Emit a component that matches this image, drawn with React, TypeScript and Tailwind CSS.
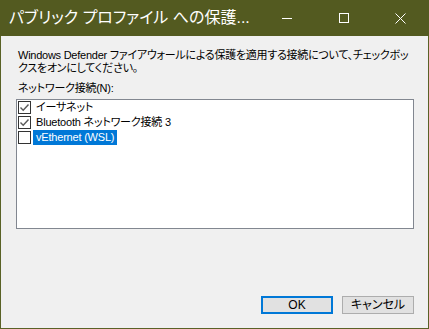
import React from 'react';

const uiFont = "[font-family:'Liberation_Sans','Noto_Sans_CJK_JP',sans-serif] [font-feature-settings:'palt']";

function CheckBox({ checked }: { checked: boolean }) {
  return (
    <span className="flex h-[13px] w-[13px] shrink-0 items-center justify-center border border-[#333333] bg-white">
      {checked && (
        <svg width="11" height="11" viewBox="0 0 11 11">
          <path d="M1.5 5.5 L4.2 8.2 L9.5 2.5" fill="none" stroke="#5a5a5a" strokeWidth="1.4" />
        </svg>
      )}
    </span>
  );
}

function ListRow({ label, checked, selected }: { label: string; checked: boolean; selected?: boolean }) {
  return (
    <div className="flex h-[15px] items-center pl-[1px]">
      <CheckBox checked={checked} />
      <span
        className={
          'ml-[2px] px-[3px] text-[11px] tracking-[-0.2px] leading-[15px] whitespace-nowrap ' +
          (selected ? 'bg-[#0078d7] text-white' : 'text-black')
        }
      >
        {label}
      </span>
    </div>
  );
}

export default function App() {
  return (
    <div className={`flex h-[329px] w-[429px] flex-col border border-t-0 border-[#5a6226] bg-[#f0f0f0] ${uiFont}`}>
      {/* title bar */}
      <div className="flex h-[36px] shrink-0 items-center bg-[#535a20] -mx-[1px]">
        <div className="flex-1 pl-[9px] text-[16px] leading-[36px] text-white whitespace-nowrap">
          パブリック プロファイル への保護...
        </div>
        <div className="flex h-full">
          <div className="flex w-[57px] items-center justify-center">
            <span className="mt-[1px] block h-[1px] w-[10px] bg-white" />
          </div>
          <div className="flex w-[57px] items-center justify-center">
            <span className="block h-[10px] w-[10px] border border-white" />
          </div>
          <div className="flex w-[57px] items-center justify-center">
            <svg width="11" height="11" viewBox="0 0 11 11">
              <path d="M0.5 0.5 L10.5 10.5 M10.5 0.5 L0.5 10.5" stroke="white" strokeWidth="1" />
            </svg>
          </div>
        </div>
      </div>

      {/* body */}
      <div className="flex flex-1 flex-col pl-[15px] pr-[14px]">
        <p className="pl-[2px] pt-[13px] text-[11px] tracking-[-0.25px] leading-[13px] text-black whitespace-nowrap">
          Windows Defender ファイアウォールによる保護を適用する接続について、チェックボッ
          <br />
          クスをオンにしてください。
        </p>
        <p className="mt-[7px] pl-[2px] text-[11px] tracking-[-0.25px] leading-[13px] text-black">ネットワーク接続(N):</p>

        <div className="mt-[4px] h-[130px] border border-[#828790] bg-white">
          <ListRow label="イーサネット" checked />
          <ListRow label="Bluetooth ネットワーク接続 3" checked />
          <ListRow label="vEthernet (WSL)" checked={false} selected />
        </div>

        <div className="mt-[67px] flex justify-end gap-[9px]">
          <button className="h-[18px] w-[72px] border-2 border-[#0078d7] bg-[#e1e1e1] text-[12px] leading-[14px] text-black">
            OK
          </button>
          <button className="h-[18px] w-[72px] border border-[#adadad] bg-[#e1e1e1] text-[12px] leading-[16px] text-black">
            キャンセル
          </button>
        </div>
      </div>
    </div>
  );
}
